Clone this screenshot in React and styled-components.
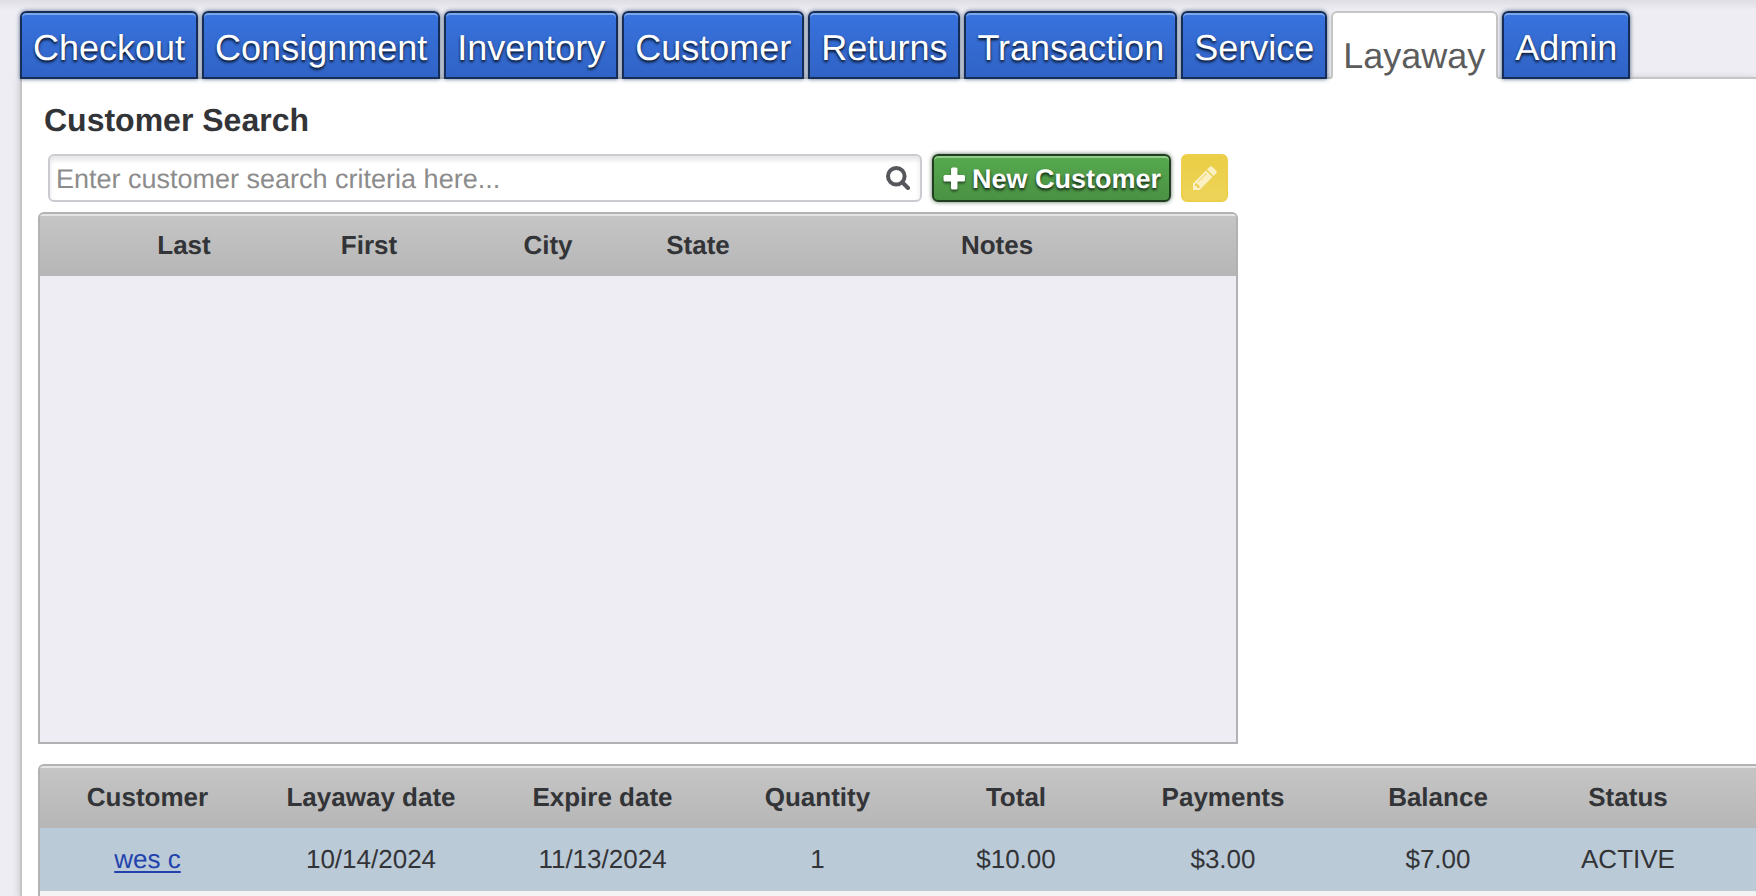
import styled, { createGlobalStyle } from "styled-components";

const GlobalStyle = createGlobalStyle`
  * {
    box-sizing: border-box;
  }
  body {
    margin: 0;
    background: #eeedf3;
    color: #333437;
    font-family: "Liberation Sans", Arial, sans-serif;
    font-size: 26px;
    text-rendering: geometricPrecision;
  }
`;

const tabs = [
  "Checkout",
  "Consignment",
  "Inventory",
  "Customer",
  "Returns",
  "Transaction",
  "Service",
  "Layaway",
  "Admin",
];

const searchColumns = [
  { label: "", width: 48 },
  { label: "Last", width: 192 },
  { label: "First", width: 178 },
  { label: "City", width: 180 },
  { label: "State", width: 120 },
  { label: "Notes" },
];

const layawayColumns = [
  { label: "Customer", width: 215 },
  { label: "Layaway date", width: 232 },
  { label: "Expire date", width: 231 },
  { label: "Quantity", width: 199 },
  { label: "Total", width: 198 },
  { label: "Payments", width: 216 },
  { label: "Balance", width: 214 },
  { label: "Status", width: 166 },
  { label: "" },
];

const layaways = [
  {
    customer: "wes c",
    values: ["10/14/2024", "11/13/2024", "1", "$10.00", "$3.00", "$7.00", "ACTIVE"],
  },
];

function HeadRow({ columns }) {
  return (
    <thead>
      <tr>
        {columns.map((col, i) => (
          <HeadCell key={i} $width={col.width}>
            {col.label}
          </HeadCell>
        ))}
      </tr>
    </thead>
  );
}

function CustomerSearch() {
  return (
    <section>
      <Title>Customer Search</Title>
      <SearchBar>
        <SearchBox>
          <SearchInput
            type="text"
            aria-label="Customer search"
            placeholder="Enter customer search criteria here..."
          />
          <SearchButton type="button" aria-label="Search">
            <svg width="24" height="24" viewBox="0 0 24 24">
              <circle cx="10.3" cy="10.3" r="8.3" fill="none" stroke="currentColor" strokeWidth="4" />
              <path d="M16.5 16.5l5.5 5.5" stroke="currentColor" strokeWidth="4" strokeLinecap="round" />
            </svg>
          </SearchButton>
        </SearchBox>
        <NewButton type="button">
          <svg width="24" height="24" viewBox="0 0 24 24" fill="currentColor">
            <rect x="9" y="0.5" width="6.5" height="22" rx="1.5" />
            <rect x="1.5" y="8" width="21.5" height="6.5" rx="1.5" />
          </svg>
          New Customer
        </NewButton>
        <EditButton type="button" aria-label="Edit customer">
          <svg width="24" height="24" viewBox="0 0 1536 1536" fill="currentColor">
            <path d="M363 1408l91-91-235-235-91 91v107h128v128h107zm523-928q0-22-22-22-10 0-17 7l-542 542q-7 7-7 17 0 22 22 22 10 0 17-7l542-542q7-7 7-17zm-54-192l416 416-832 832H0v-416zm683 96q0 53-37 90l-166 166-416-416 166-165q36-38 90-38 53 0 91 38l235 234q37 39 37 91z" />
          </svg>
        </EditButton>
      </SearchBar>
      <Results>
        <Table>
          <HeadRow columns={searchColumns} />
        </Table>
      </Results>
    </section>
  );
}

function LayawayList() {
  return (
    <List>
      <Table>
        <HeadRow columns={layawayColumns} />
        <tbody>
          {layaways.map((row) => (
            <Row key={row.customer}>
              <Cell>
                <CustomerLink href="#customer">{row.customer}</CustomerLink>
              </Cell>
              {row.values.map((value) => (
                <Cell key={value}>{value}</Cell>
              ))}
              <Cell />
            </Row>
          ))}
        </tbody>
      </Table>
    </List>
  );
}

function App() {
  return (
    <Page>
      <GlobalStyle />
      <TabBar>
        {tabs.map((name) => (
          <Tab key={name} type="button" $active={name === "Layaway"}>
            {name}
          </Tab>
        ))}
      </TabBar>
      <Panel>
        <CustomerSearch />
        <LayawayList />
      </Panel>
    </Page>
  );
}

export default App;

const Page = styled.div`
  display: flex;
  flex-direction: column;
  min-height: 100vh;
  overflow: hidden;
  background: linear-gradient(#dfdee4, #eeedf3 10px);
`;

const TabBar = styled.nav`
  position: relative;
  z-index: 1;
  display: flex;
  gap: 4px;
  margin-bottom: -2px;
  padding: 11px 0 0 20px;
`;

const Tab = styled.button`
  height: 68px;
  padding: ${({ $active }) => ($active ? "21px 11px 0 10px" : "5px 11px 0")};
  border: 2px solid ${({ $active }) => ($active ? "#c5c5c5" : "#162d57")};
  border-bottom-color: ${({ $active }) => ($active ? "#fff" : "#162d57")};
  border-radius: 6px 6px 0 0;
  background: ${({ $active }) => ($active ? "#fff" : "linear-gradient(#3873de, #3063c6)")};
  box-shadow: ${({ $active }) =>
    $active ? "none" : "inset 0 2px 0 #7ba7ea, 0 0 4px rgba(22, 52, 92, 0.75)"};
  color: ${({ $active }) => ($active ? "#5c5c5c" : "#fff")};
  font-family: inherit;
  font-size: 36px;
  line-height: 40px;
  text-rendering: inherit;
  text-shadow: ${({ $active }) => ($active ? "none" : "0 2px 3px rgba(0, 0, 0, 0.9)")};
`;

const Panel = styled.main`
  flex: 1;
  display: flex;
  flex-direction: column;
  gap: 20px;
  margin-left: 20px;
  padding: 22px 0 0 16px;
  border-top: 2px solid #c5c5c5;
  border-left: 2px solid #c5c5c5;
  background: #fff;
  box-shadow: 0 2px 8px rgba(0, 0, 0, 0.2);
`;

const Title = styled.h1`
  margin: 0 0 15px 6px;
  font-size: 32px;
  line-height: 38px;
`;

const SearchBar = styled.div`
  display: flex;
  gap: 10px;
  max-width: 1190px;
  margin-bottom: 10px;
  padding-left: 10px;
`;

const SearchBox = styled.div`
  flex: 1;
  display: flex;
  align-items: center;
  height: 48px;
  padding: 0 10px 0 6px;
  border: 2px solid #cbcbd1;
  border-radius: 6px;
  background: #fff;
  box-shadow: inset 0 4px 5px rgba(0, 0, 0, 0.1);
`;

const SearchInput = styled.input`
  flex: 1;
  min-width: 0;
  padding: 2px 0 0;
  border: 0;
  outline: 0;
  background: none;
  color: inherit;
  font-family: inherit;
  font-size: 27px;
  text-rendering: inherit;
  &::placeholder {
    color: #8c8c8c;
    opacity: 1;
  }
`;

const SearchButton = styled.button`
  display: flex;
  padding: 0;
  border: 0;
  background: none;
  color: #56575c;
`;

const NewButton = styled.button`
  display: flex;
  align-items: center;
  gap: 6px;
  height: 48px;
  padding: 2px 8px 0;
  border: 2px solid #213f20;
  border-radius: 6px;
  background: linear-gradient(#56aa4e, #4a9144);
  box-shadow: inset 0 2px 0 #93cd8e, 0 0 4px rgba(22, 52, 22, 0.7);
  color: #fff;
  font-family: inherit;
  font-size: 27px;
  font-weight: bold;
  text-rendering: inherit;
  white-space: nowrap;
  text-shadow: 0 2px 3px rgba(0, 0, 0, 0.8);
  svg {
    filter: drop-shadow(0 2px 1px rgba(0, 0, 0, 0.5));
  }
`;

const EditButton = styled.button`
  display: flex;
  align-items: center;
  justify-content: center;
  width: 47px;
  height: 48px;
  padding: 0;
  border: 2px solid #edcf4c;
  border-radius: 6px;
  background: linear-gradient(#eace46, #eed45a);
  color: #faf0c4;
`;

const Results = styled.div`
  max-width: 1200px;
  height: 532px;
  border: 2px solid #b2b2b4;
  border-radius: 6px 6px 0 0;
  background: #eeedf3;
  overflow: hidden;
`;

const List = styled.section`
  flex: 1;
  border: 2px solid #b2b2b4;
  border-width: 2px 0 0 2px;
  border-radius: 6px 0 0 0;
  background: #f3f3f3;
  overflow: hidden;
`;

const Table = styled.table`
  width: 100%;
  table-layout: fixed;
  border-spacing: 0;
  text-align: center;
  thead {
    background: linear-gradient(#e4e4e4 2px, #c5c5c5 2px, #b6b6b6);
  }
`;

const HeadCell = styled.th`
  width: ${({ $width }) => ($width ? `${$width}px` : "auto")};
  height: 62px;
  padding: 0;
  line-height: 30px;
  white-space: nowrap;
`;

const Row = styled.tr`
  background: #bbcad7;
`;

const Cell = styled.td`
  height: 63px;
  padding: 0 0 2px;
  line-height: 30px;
`;

const CustomerLink = styled.a`
  color: #2142ad;
  text-decoration-thickness: 2px;
  text-underline-offset: 3px;
`;
